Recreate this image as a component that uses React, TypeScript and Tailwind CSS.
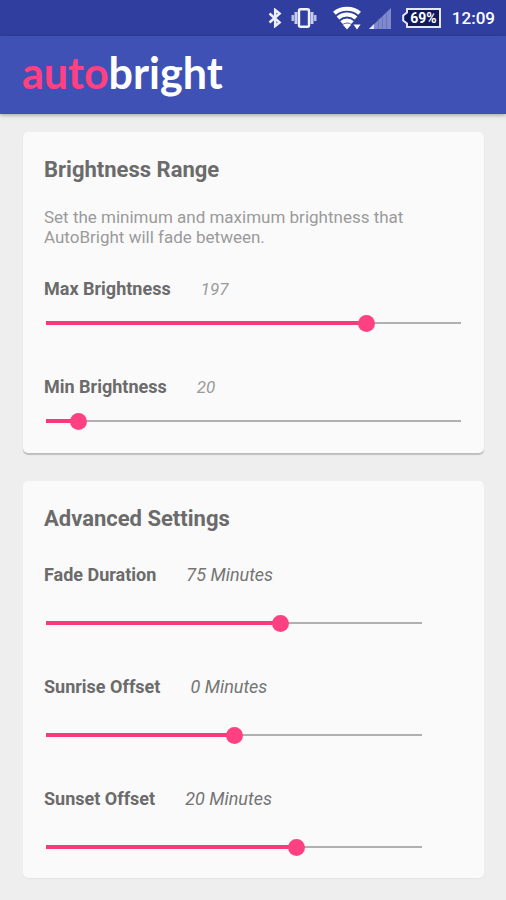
import { useId, useState } from "react";

function BluetoothIcon() {
  return (
    <svg className="w-[14px] h-[20px]" viewBox="0 0 14 20" aria-hidden="true">
      <path
        d="M1.5 5.5L11.6 14.4L7.2 18V2L11.6 5.6L1.5 14.5"
        fill="none"
        stroke="#eceefc"
        strokeWidth="2.5"
      />
    </svg>
  );
}

function VibrateIcon() {
  return (
    <svg className="w-[26px] h-[20px]" viewBox="0 0 26 20" aria-hidden="true">
      <rect
        x="8"
        y="1.2"
        width="10"
        height="17.6"
        rx="1.5"
        fill="none"
        stroke="#f1f3ff"
        strokeWidth="2.4"
      />
      <path d="M5 4v12M21 4v12" stroke="#c9cff0" strokeWidth="3" />
      <path d="M1.8 7v6M24.2 7v6" stroke="#b9c0ea" strokeWidth="2.6" />
    </svg>
  );
}

function WifiIcon() {
  return (
    <svg className="w-[28px] h-[24px]" viewBox="0 0 28 24" aria-hidden="true">
      <g fill="none" stroke="#ffffff" strokeWidth="4">
        <path d="M1.4 7.2C8 1.2 20 1.2 26.6 7.2" />
        <path d="M5 12C10 7.4 18 7.4 23 12" />
        <path d="M8.6 16.6C11.6 13.8 16.4 13.8 19.4 16.6" />
      </g>
      <path d="M14 23.4L9.8 18.8C12.2 17 15.8 17 18.2 18.8Z" fill="#fff" />
      <path d="M20.4 18.6h7.2L24 23.6Z" fill="#ffffff" />
    </svg>
  );
}

function SignalIcon() {
  return (
    <svg className="w-[22px] h-[22px]" viewBox="0 0 22 22" aria-hidden="true">
      <path d="M0 22L22 1V22Z" fill="#7f89cb" />
      <path d="M0 22L5 17V22Z" fill="#e4e7fa" />
      <path
        d="M9.5 12.5V22M13.5 9V22M17.5 5V22"
        stroke="#6975c0"
        strokeWidth="1"
      />
    </svg>
  );
}

function BatteryIcon() {
  return (
    <svg
      className="[grid-area:1/1] w-[39px] h-[20px]"
      viewBox="0 0 39 20"
      aria-hidden="true"
    >
      <path
        d="M5 1H38V19H5V15.5L1.2 12.5V7.5L5 4.5Z"
        fill="#10195c"
        stroke="#e4e7fa"
        strokeWidth="2"
      />
    </svg>
  );
}

function StatusBar() {
  return (
    <div className="h-9 bg-[#303f9f] flex items-center justify-end pr-[11px] text-white">
      <BluetoothIcon />
      <div className="ml-[9px]">
        <VibrateIcon />
      </div>
      <div className="ml-[16px]">
        <WifiIcon />
      </div>
      <div className="ml-[8px]">
        <SignalIcon />
      </div>
      <div className="ml-[11px] grid items-center">
        <BatteryIcon />
        <span className="[grid-area:1/1] pl-1 text-center text-[14px] leading-5 font-bold">
          69%
        </span>
      </div>
      <span className="ml-[11px] text-[17px] leading-6 font-medium">12:09</span>
    </div>
  );
}

type SliderProps = {
  label: string;
  min: number;
  max: number;
  initial: number;
  unit?: string;
  roomy?: boolean;
};

function SliderSetting({ label, min, max, initial, unit, roomy }: SliderProps) {
  const id = useId();
  const [value, setValue] = useState(initial);
  const percent = ((value - min) / (max - min)) * 100;

  return (
    <div>
      <div className="flex items-center gap-[30px] text-[18px] leading-6">
        <label htmlFor={id} className="font-bold text-[#6b6b6b]">
          {label}
        </label>
        <output
          htmlFor={id}
          className={
            unit
              ? "italic text-[#757575]"
              : "italic text-[#9a9a9a] text-[17px]"
          }
        >
          {value}
          {unit && ` ${unit}`}
        </output>
      </div>
      <div
        className={
          roomy
            ? "grid items-center h-5 mt-[26px] ml-[2px] mr-[41px]"
            : "grid items-center h-5 mt-3 ml-[2px] mr-[2px]"
        }
      >
        <div className="[grid-area:1/1] h-[2px] bg-[#b0b0b0]" />
        <div
          className="[grid-area:1/1] h-1 bg-[#f83a7c]"
          style={{ width: `${percent}%` }}
        />
        <input
          id={id}
          type="range"
          min={min}
          max={max}
          value={value}
          onChange={(e) => setValue(Number(e.target.value))}
          className="[grid-area:1/1] -mx-2 h-5 appearance-none bg-transparent cursor-pointer [&::-webkit-slider-thumb]:appearance-none [&::-webkit-slider-thumb]:w-[17px] [&::-webkit-slider-thumb]:h-[17px] [&::-webkit-slider-thumb]:rounded-full [&::-webkit-slider-thumb]:bg-[#ff4081]"
        />
      </div>
    </div>
  );
}

export default function App() {
  return (
    <div className="min-h-screen bg-[#eeeeee] font-[Roboto,sans-serif]">
      <StatusBar />
      <header className="h-[78px] px-[22px] pb-1 bg-[#3f51b5] flex items-center shadow-[0_1px_4px_rgba(0,0,0,0.35)]">
        <h1 className="font-[Lato,sans-serif] text-[43px] leading-[48px] font-bold text-white">
          <span className="text-[#ff4081]">auto</span>bright
        </h1>
      </header>

      <main className="pt-[18px] pb-[22px] pl-[23px] pr-[22px] flex flex-col gap-7">
        <section className="bg-[#fafafa] rounded-[5px] shadow-[0_2px_1px_rgba(0,0,0,0.2)] px-[21px] pt-6 pb-[22px]">
          <h2 className="text-[22px] leading-7 font-bold text-[#6b6b6b]">
            Brightness Range
          </h2>
          <p className="mt-[23px] max-w-[370px] text-[17px] leading-5 text-[#9a9a9a]">
            Set the minimum and maximum brightness that AutoBright will fade
            between.
          </p>
          <div className="mt-[30px] flex flex-col gap-[42px]">
            <SliderSetting
              label="Max Brightness"
              min={0}
              max={255}
              initial={197}
            />
            <SliderSetting
              label="Min Brightness"
              min={0}
              max={255}
              initial={20}
            />
          </div>
        </section>

        <section className="bg-[#fafafa] rounded-[5px] shadow-[0_1px_1px_rgba(0,0,0,0.04)] px-[21px] pt-6 pb-[21px]">
          <h2 className="text-[22px] leading-7 font-bold text-[#6b6b6b]">
            Advanced Settings
          </h2>
          <div className="mt-[30px] flex flex-col gap-[42px]">
            <SliderSetting
              label="Fade Duration"
              min={0}
              max={120}
              initial={75}
              unit="Minutes"
              roomy
            />
            <SliderSetting
              label="Sunrise Offset"
              min={-60}
              max={60}
              initial={0}
              unit="Minutes"
              roomy
            />
            <SliderSetting
              label="Sunset Offset"
              min={-60}
              max={60}
              initial={20}
              unit="Minutes"
              roomy
            />
          </div>
        </section>
      </main>
    </div>
  );
}
